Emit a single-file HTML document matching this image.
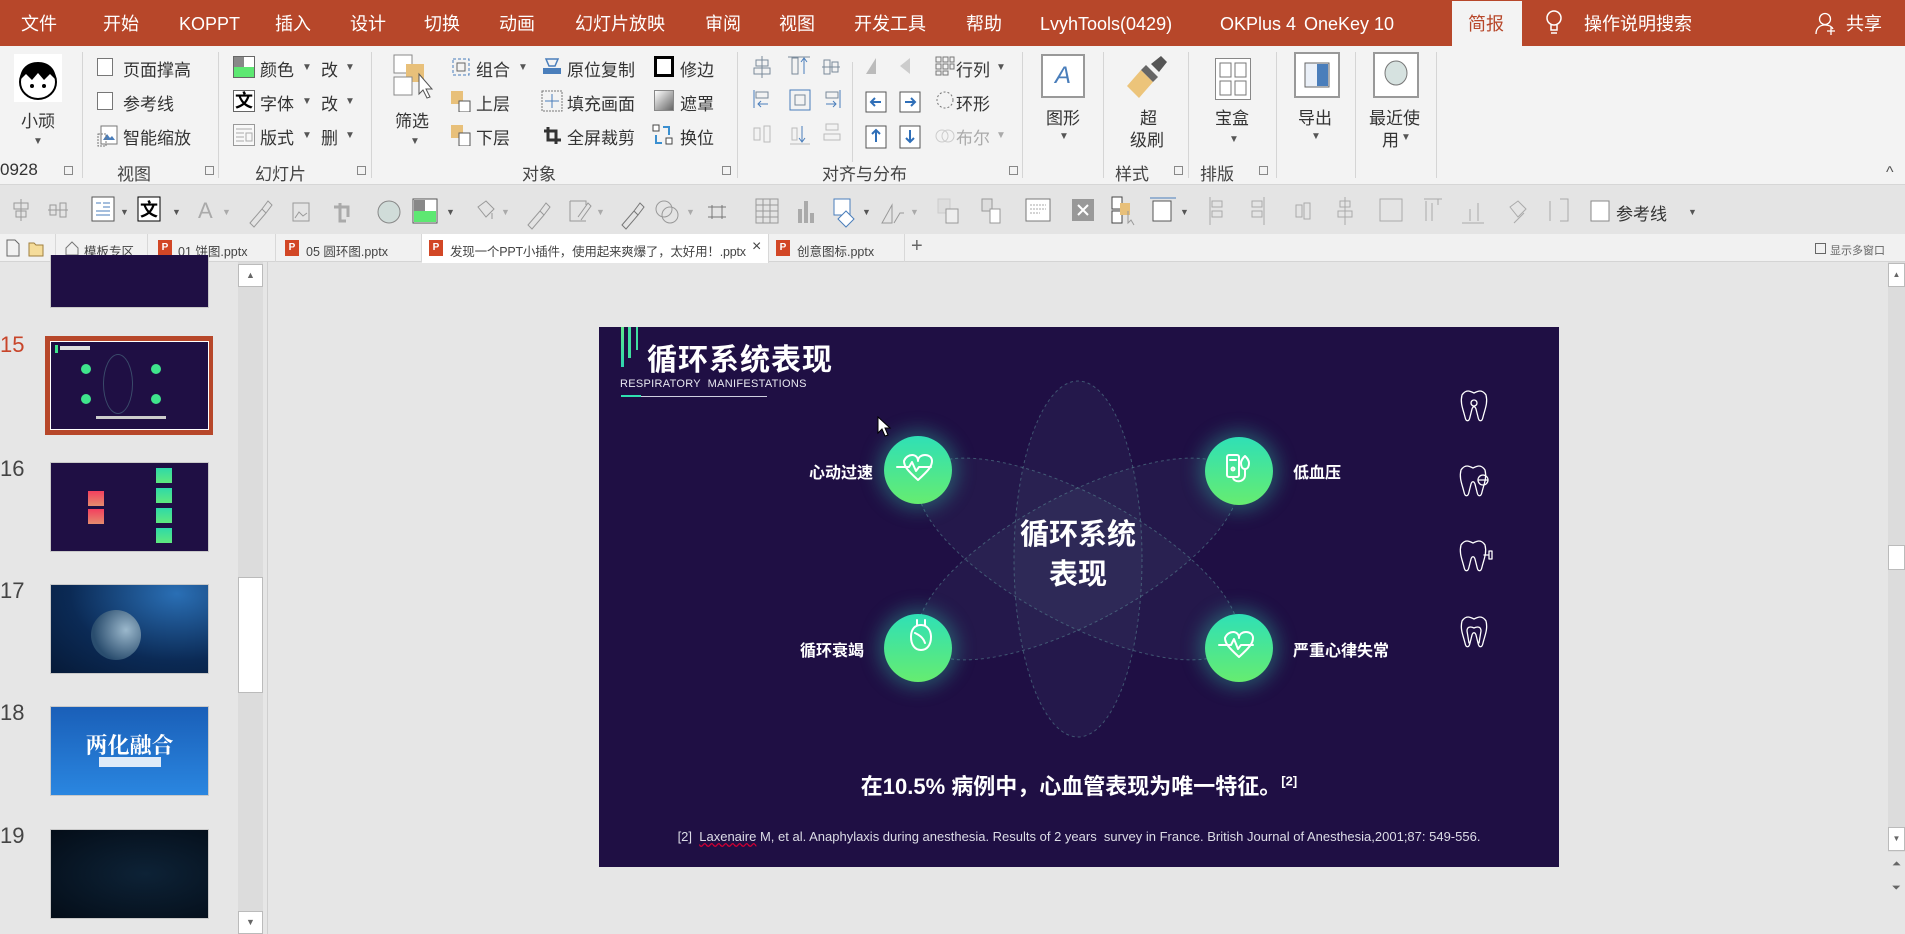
<!DOCTYPE html>
<html><head><meta charset="utf-8">
<style>
*{margin:0;padding:0;box-sizing:border-box}
body{width:1905px;height:934px;overflow:hidden;background:#e6e6e6;font-family:"Liberation Sans","Noto Sans CJK SC",sans-serif;position:relative;color:#333}
.a{position:absolute;white-space:nowrap}
#top{position:absolute;left:0;top:0;width:1905px;height:46px;background:#b7472a}
#top .a{color:#fff;font-size:18px;top:0;line-height:48px}
#rib{position:absolute;left:0;top:46px;width:1905px;height:139px;background:#f3f3f3;border-bottom:1px solid #d6d6d6}
.t{font-size:17px;color:#333}
.sep{position:absolute;top:52px;width:1px;height:126px;background:#d5d5d5}
.lbl{font-size:17px;color:#444;top:160px}
.dl{font-size:10px;color:#666;top:166px;width:9px;height:9px;border:1px solid #888}
.ar{font-size:10px;color:#555}
.ic{position:absolute}
#tb{position:absolute;left:0;top:185px;width:1905px;height:49px;background:#e4e4e4}
#ft{position:absolute;left:0;top:234px;width:1905px;height:28px;background:#f1f1f1;border-bottom:1px solid #d4d4d4}
#ft .a{font-size:12.5px;color:#444;top:7px}
.tab{position:absolute;top:0;height:28px;border-right:1px solid #d8d8d8}
.pp{position:absolute;top:6px;width:14px;height:16px;background:#d24726;color:#fff;font-size:10px;font-weight:bold;text-align:center;line-height:16px}
.num{position:absolute;left:0;font-size:22px;color:#444}
.th{position:absolute;left:50px;width:159px;height:90px;border:1px solid #c8c8c8}
#slide{position:absolute;left:599px;top:327px;width:960px;height:540px;background:#1f0f44;overflow:hidden}
.circ{position:absolute;width:68px;height:68px;border-radius:50%;background:linear-gradient(#2fe0b6,#66ec70);box-shadow:0 0 18px 6px rgba(50,200,170,.35)}
.sl{position:absolute;color:#fff;font-weight:bold;font-size:16px;white-space:nowrap}
</style></head><body>

<div id="top">
<span class="a" style="left:21px">文件</span>
<span class="a" style="left:103px">开始</span>
<span class="a" style="left:179px">KOPPT</span>
<span class="a" style="left:275px">插入</span>
<span class="a" style="left:350px">设计</span>
<span class="a" style="left:424px">切换</span>
<span class="a" style="left:499px">动画</span>
<span class="a" style="left:575px">幻灯片放映</span>
<span class="a" style="left:705px">审阅</span>
<span class="a" style="left:779px">视图</span>
<span class="a" style="left:854px">开发工具</span>
<span class="a" style="left:966px">帮助</span>
<span class="a" style="left:1040px">LvyhTools(0429)</span>
<span class="a" style="left:1220px">OKPlus 4</span>
<span class="a" style="left:1304px">OneKey 10</span>
<div style="position:absolute;left:1452px;top:1px;width:70px;height:45px;background:#f3f3f3"></div>
<span class="a" style="left:1468px;color:#b7472a !important">简报</span>
<svg class="ic" style="left:1545px;top:9px" width="18" height="28"><circle cx="9" cy="9" r="7" fill="none" stroke="#fff" stroke-width="1.5"/><path d="M6 16v5h6v-5M6 24h6" stroke="#fff" stroke-width="1.5" fill="none"/></svg>
<span class="a" style="left:1584px">操作说明搜索</span>
<svg class="ic" style="left:1815px;top:12px" width="22" height="24"><circle cx="10" cy="7" r="5.5" fill="none" stroke="#fff" stroke-width="1.3"/><path d="M1 22c0-6 4-9 9-9s7 2 8 4M16 15v8M12 19h8" stroke="#fff" stroke-width="1.3" fill="none"/></svg>
<span class="a" style="left:1846px">共享</span>
</div>
<style>#top span[style*="1468"]{color:#b7472a}</style>

<div id="rib">
<svg class="ic" style="left:14px;top:8px" width="48" height="48"><rect width="48" height="48" fill="#fff"/><ellipse cx="24" cy="28" rx="18" ry="17" fill="#fff" stroke="#000" stroke-width="2"/><path d="M6 26c0-12 8-18 18-18s18 6 18 18l-6-6-6 6-6-7-6 7-6-6z" fill="#000"/><circle cx="18" cy="32" r="2" fill="#000"/><circle cx="30" cy="32" r="2" fill="#000"/></svg>
<span class="a t" style="left:21px;top:61px">小顽</span>
<span class="a ar" style="left:33px;top:90px">▼</span>
<span class="a t" style="left:0;top:114px">0928</span>
<div class="a dl" style="left:64px;top:120px"></div>
<div class="sep" style="left:82px;top:6px"></div>
<div class="ic" style="left:97px;top:12px;width:16px;height:18px;border:1.5px solid #777;background:#fff"></div>
<span class="a t" style="left:123px;top:10px">页面撑高</span>
<div class="ic" style="left:97px;top:46px;width:16px;height:18px;border:1.5px solid #777;background:#fff"></div>
<span class="a t" style="left:123px;top:44px">参考线</span>
<svg class="ic" style="left:97px;top:78px" width="22" height="24"><rect x="4" y="2" width="16" height="18" fill="#fff" stroke="#777"/><path d="M6 16l4-6 3 4 2-2 3 4z" fill="#4a7ebb"/><rect x="1" y="10" width="8" height="12" fill="none" stroke="#777" stroke-dasharray="2 1"/></svg>
<span class="a t" style="left:123px;top:78px">智能缩放</span>
<span class="a lbl" style="left:117px;top:114px">视图</span>
<div class="a dl" style="left:205px;top:120px"></div>
<div class="sep" style="left:218px;top:6px"></div>
<svg class="ic" style="left:233px;top:10px" width="22" height="22"><rect x=".5" y=".5" width="21" height="21" fill="#fff" stroke="#666"/><rect x="1" y="1" width="10" height="10" fill="#888"/><rect x="1" y="11" width="20" height="10" fill="#5de872"/></svg>
<span class="a t" style="left:260px;top:10px">颜色</span><span class="a ar" style="left:302px;top:16px">▼</span>
<span class="a t" style="left:321px;top:10px">改</span><span class="a ar" style="left:345px;top:16px">▼</span>
<div class="ic" style="left:233px;top:44px;width:22px;height:22px;border:1px solid #666;background:#fff;font-size:18px;font-weight:bold;line-height:20px;text-align:center;color:#000">文</div>
<span class="a t" style="left:260px;top:44px">字体</span><span class="a ar" style="left:302px;top:50px">▼</span>
<span class="a t" style="left:321px;top:44px">改</span><span class="a ar" style="left:345px;top:50px">▼</span>
<svg class="ic" style="left:233px;top:78px" width="22" height="22"><rect x=".5" y=".5" width="21" height="21" fill="#f8f8f8" stroke="#999"/><path d="M3 5h16M3 9h8M3 13h8M3 17h8M13 9h6v8h-6z" stroke="#aaa" fill="none"/></svg>
<span class="a t" style="left:260px;top:78px">版式</span><span class="a ar" style="left:302px;top:84px">▼</span>
<span class="a t" style="left:321px;top:78px">删</span><span class="a ar" style="left:345px;top:84px">▼</span>
<span class="a lbl" style="left:255px;top:114px">幻灯片</span>
<div class="a dl" style="left:357px;top:120px"></div>
<div class="sep" style="left:371px;top:6px"></div>
<svg class="ic" style="left:393px;top:8px" width="42" height="48"><rect x="1" y="1" width="18" height="18" fill="#fff" stroke="#888"/><rect x="13" y="10" width="18" height="18" fill="#e8c07a"/><rect x="1" y="23" width="18" height="18" fill="#fff" stroke="#888"/><path d="M26 20l0 20 4-4 4 8 3-1-4-8 6 0z" fill="#fff" stroke="#555"/></svg>
<span class="a t" style="left:395px;top:61px">筛选</span>
<span class="a ar" style="left:410px;top:90px">▼</span>
<svg class="ic" style="left:450px;top:10px" width="22" height="22"><rect x="3" y="3" width="16" height="16" fill="none" stroke="#4a7ebb" stroke-dasharray="3 2"/><rect x="7" y="7" width="8" height="8" fill="none" stroke="#666"/></svg>
<span class="a t" style="left:476px;top:10px">组合</span><span class="a ar" style="left:518px;top:16px">▼</span>
<svg class="ic" style="left:450px;top:44px" width="22" height="22"><rect x="1" y="1" width="12" height="13" fill="#e8c07a"/><rect x="9" y="11" width="11" height="11" fill="#fff" stroke="#555"/></svg>
<span class="a t" style="left:476px;top:44px">上层</span>
<svg class="ic" style="left:450px;top:78px" width="22" height="22"><rect x="1" y="1" width="12" height="13" fill="#e8c07a"/><rect x="9" y="9" width="11" height="13" fill="#fff" stroke="#555"/></svg>
<span class="a t" style="left:476px;top:78px">下层</span>
<svg class="ic" style="left:541px;top:10px" width="22" height="22"><path d="M5 3h12l-3 7h-6z" fill="none" stroke="#4a7ebb" stroke-width="1.5"/><rect x="2" y="12" width="18" height="6" fill="#4a7ebb"/></svg>
<span class="a t" style="left:567px;top:10px">原位复制</span>
<svg class="ic" style="left:541px;top:44px" width="22" height="22"><rect x="1" y="1" width="20" height="20" fill="none" stroke="#777" stroke-dasharray="2 1"/><path d="M11 4v14M4 11h14" stroke="#4a7ebb"/></svg>
<span class="a t" style="left:567px;top:44px">填充画面</span>
<svg class="ic" style="left:541px;top:78px" width="22" height="22"><path d="M7 3v13h13M3 7h12v13" stroke="#333" stroke-width="3" fill="none"/></svg>
<span class="a t" style="left:567px;top:78px">全屏裁剪</span>
<div class="ic" style="left:654px;top:10px;width:20px;height:21px;border:3px solid #000;background:#fff"></div>
<span class="a t" style="left:680px;top:10px">修边</span>
<div class="ic" style="left:654px;top:44px;width:20px;height:21px;border:1px solid #888;background:linear-gradient(135deg,#fff,#666)"></div>
<span class="a t" style="left:680px;top:44px">遮罩</span>
<svg class="ic" style="left:652px;top:78px" width="22" height="22"><rect x="1" y="1" width="6" height="6" fill="#fff" stroke="#444"/><rect x="14" y="14" width="6" height="6" fill="#fff" stroke="#444"/><path d="M11 3h6v8M10 19h-6v-8" stroke="#3a8fd0" stroke-width="2" fill="none"/></svg>
<span class="a t" style="left:680px;top:78px">换位</span>
<span class="a lbl" style="left:522px;top:114px">对象</span>
<div class="a dl" style="left:722px;top:120px"></div>
<div class="sep" style="left:737px;top:6px"></div>
<svg class="ic" style="left:752px;top:8px" width="90" height="100" stroke="#7a8a9a" fill="none">
<rect x="4" y="6" width="12" height="6"/><rect x="2" y="14" width="16" height="6"/><path d="M10 2v22"/>
<rect x="40" y="4" width="6" height="16"/><path d="M52 20V4m-3 4l3-4 3 4" stroke="#4a7ebb"/><path d="M36 3h22"/>
<rect x="72" y="6" width="6" height="14"/><rect x="80" y="8" width="6" height="10"/><path d="M70 13h18"/>
<rect x="4" y="38" width="12" height="6"/><path d="M2 36v18M6 50h10m-7-3l-3 3 3 3" stroke="#4a7ebb"/>
<rect x="38" y="36" width="20" height="20" stroke="#4a7ebb"/><rect x="43" y="41" width="10" height="10"/>
<rect x="74" y="38" width="12" height="6"/><path d="M88 36v18M74 50h10m-3-3l3 3-3 3" stroke="#4a7ebb"/>
<g stroke="#bbb"><rect x="2" y="74" width="6" height="12"/><rect x="12" y="72" width="6" height="16"/><rect x="40" y="74" width="5" height="12"/><path d="M50 72v16m-3-4l3 4 3-4" stroke="#4a7ebb"/><path d="M38 90h20"/><rect x="74" y="70" width="12" height="6"/><rect x="72" y="80" width="16" height="6"/></g>
</svg>
<div class="sep" style="left:852px;top:16px;height:100px"></div>
<svg class="ic" style="left:864px;top:8px" width="70" height="100">
<path d="M2 20l10-16v16z" fill="#bbb"/><path d="M36 12l10-8v16z" fill="#ccc"/>
<rect x="2" y="38" width="20" height="20" fill="#fff" stroke="#555"/><path d="M17 48H7m4-4l-4 4 4 4" stroke="#2f6fb8" stroke-width="2" fill="none"/>
<rect x="36" y="38" width="20" height="20" fill="#fff" stroke="#555"/><path d="M41 48h10m-4-4l4 4-4 4" stroke="#2f6fb8" stroke-width="2" fill="none"/>
<rect x="2" y="72" width="20" height="22" fill="#fff" stroke="#555"/><path d="M12 88V76m-4 4l4-4 4 4" stroke="#2f6fb8" stroke-width="2" fill="none"/>
<rect x="36" y="72" width="20" height="22" fill="#fff" stroke="#555"/><path d="M46 76v12m-4-4l4 4 4-4" stroke="#2f6fb8" stroke-width="2" fill="none"/>
</svg>
<svg class="ic" style="left:935px;top:10px" width="20" height="90" fill="none" stroke="#777"><rect x="1" y="1" width="5" height="5"/><rect x="8" y="1" width="5" height="5"/><rect x="15" y="1" width="4" height="5"/><rect x="1" y="8" width="5" height="5"/><rect x="8" y="8" width="5" height="5"/><rect x="15" y="8" width="4" height="5"/><rect x="1" y="15" width="5" height="4"/><rect x="8" y="15" width="5" height="4"/><circle cx="10" cy="44" r="8" stroke-dasharray="2 2"/><circle cx="7" cy="80" r="6" stroke="#ccc"/><circle cx="13" cy="80" r="6" stroke="#ccc"/></svg>
<span class="a t" style="left:956px;top:10px">行列</span><span class="a ar" style="left:996px;top:16px">▼</span>
<span class="a t" style="left:956px;top:44px">环形</span>
<span class="a t" style="left:956px;top:78px;color:#aaa">布尔</span><span class="a ar" style="left:996px;top:84px;color:#aaa">▼</span>
<span class="a lbl" style="left:822px;top:114px">对齐与分布</span>
<div class="a dl" style="left:1009px;top:120px"></div>
<div class="sep" style="left:1022px;top:6px"></div>
<div class="ic" style="left:1041px;top:8px;width:44px;height:44px;border:2px solid #999;background:#fff;color:#4a7ebb;font-style:italic;font-size:24px;text-align:center;line-height:40px">A</div>
<span class="a t" style="left:1046px;top:58px">图形</span><span class="a ar" style="left:1059px;top:85px">▼</span>
<div class="sep" style="left:1103px;top:6px"></div>
<svg class="ic" style="left:1125px;top:10px" width="44" height="44"><path d="M2 30l14-16 12 12-14 16z" fill="#ecc47a"/><path d="M16 14l5-5 12 12-5 5z" fill="#666"/><path d="M26 8l10-8 6 6-8 10z" fill="#555"/></svg>
<span class="a t" style="left:1140px;top:58px">超</span>
<span class="a t" style="left:1130px;top:80px">级刷</span>
<span class="a lbl" style="left:1115px;top:114px">样式</span>
<div class="a dl" style="left:1174px;top:120px"></div>
<div class="sep" style="left:1188px;top:6px"></div>
<svg class="ic" style="left:1215px;top:12px" width="36" height="42"><rect x=".5" y=".5" width="35" height="41" fill="#fff" stroke="#888"/><rect x="5" y="5" width="11" height="14" fill="none" stroke="#777"/><rect x="20" y="5" width="11" height="14" fill="none" stroke="#777"/><rect x="5" y="23" width="11" height="14" fill="none" stroke="#777"/><rect x="20" y="23" width="11" height="14" fill="none" stroke="#777"/></svg>
<span class="a t" style="left:1215px;top:58px">宝盒</span><span class="a ar" style="left:1229px;top:88px">▼</span>
<span class="a lbl" style="left:1200px;top:114px">排版</span>
<div class="a dl" style="left:1259px;top:120px"></div>
<div class="sep" style="left:1276px;top:6px"></div>
<svg class="ic" style="left:1294px;top:6px" width="46" height="46"><rect x="1" y="1" width="44" height="44" fill="#fff" stroke="#999" stroke-width="2"/><rect x="11" y="11" width="24" height="24" fill="#eaf0f8" stroke="#666"/><rect x="23" y="12" width="11" height="22" fill="#4a7ebb"/></svg>
<span class="a t" style="left:1298px;top:58px">导出</span><span class="a ar" style="left:1311px;top:85px">▼</span>
<div class="sep" style="left:1355px;top:6px"></div>
<svg class="ic" style="left:1373px;top:6px" width="46" height="46"><rect x="1" y="1" width="44" height="44" fill="#fff" stroke="#999" stroke-width="2"/><ellipse cx="23" cy="21" rx="11" ry="12" fill="#d6e2e0" stroke="#777"/></svg>
<span class="a t" style="left:1369px;top:58px">最近使</span>
<span class="a t" style="left:1382px;top:80px">用</span><span class="a ar" style="left:1401px;top:86px">▼</span>
<div class="sep" style="left:1436px;top:6px"></div>
<span class="a" style="left:1886px;top:118px;font-size:16px;color:#555">^</span>
</div>

<div id="tb">
<svg width="1720" height="49" style="position:absolute;left:0;top:0" fill="none" stroke="#999">
<g transform="translate(12,14)"><rect x="2" y="4" width="14" height="6"/><rect x="4" y="12" width="10" height="6"/><path d="M9 0v22"/></g>
<g transform="translate(50,14)"><rect x="0" y="6" width="6" height="10"/><rect x="10" y="4" width="6" height="14"/><path d="M-2 11h20"/></g>
<g transform="translate(92,12)"><rect x="0" y="0" width="22" height="24" fill="#fff" stroke="#555"/><path d="M4 6h5M11 6h7M11 10h7M4 14h14M4 18h14" stroke="#4a7ebb"/></g>
<text x="120" y="30" font-size="9" fill="#555" stroke="none">▼</text>
<g transform="translate(138,12)"><rect x="0" y="0" width="22" height="24" fill="#fff" stroke="#000"/><text x="2" y="19" font-size="18" font-weight="bold" fill="#000" stroke="none">文</text></g>
<text x="172" y="30" font-size="9" fill="#555" stroke="none">▼</text>
<text x="198" y="33" font-size="22" fill="#aaa" stroke="none">A</text><text x="222" y="30" font-size="9" fill="#aaa" stroke="none">▼</text>
<path d="M250 38l12-14 4 4-12 14zM262 24l6-8 4 4-6 8"/>
<g transform="translate(290,13)"><rect x="3" y="5" width="16" height="18"/><path d="M5 20l4-6 4 4 4-3"/></g>
<path d="M340 18v18h6M334 22h14v10" stroke="#aaa" stroke-width="3"/>
<circle cx="389" cy="27" r="11" fill="#d0dcd9" stroke="#888"/>
<g transform="translate(413,14)"><rect x="0" y="0" width="24" height="24" fill="#fff" stroke="#555"/><rect x="1" y="1" width="11" height="11" fill="#888" stroke="none"/><rect x="1" y="12" width="22" height="11" fill="#5de872" stroke="none"/></g>
<text x="446" y="30" font-size="9" fill="#555" stroke="none">▼</text>
<path d="M478 22l8-6 8 8-8 8zM492 28v6"/><text x="501" y="30" font-size="9" fill="#aaa" stroke="none">▼</text>
<path d="M528 40l12-14 4 4-12 14zM540 26l6-8 4 4-6 8"/>
<path d="M570 16h16v4M570 16v20h16M578 32l10-14 3 3-10 14"/><text x="596" y="30" font-size="9" fill="#aaa" stroke="none">▼</text>
<path d="M622 40l12-14 4 4-12 14zM634 26l6-8 4 4-6 8" stroke="#777"/>
<circle cx="664" cy="24" r="8"/><circle cx="670" cy="30" r="8"/><text x="686" y="30" font-size="9" fill="#aaa" stroke="none">▼</text>
<path d="M712 20v14M722 20v14M708 22h18M708 32h18" stroke="#777"/>
<g transform="translate(756,14)"><rect x="0" y="0" width="22" height="24"/><path d="M0 6h22M0 12h22M0 18h22M7 0v24M14 0v24"/></g>
<path d="M800 38V24M806 38V16M812 38V28" stroke="#aaa" stroke-width="4"/>
<g transform="translate(834,14)"><rect x="0" y="0" width="16" height="16" fill="#fff" stroke="#4a7ebb"/><path d="M12 12l8 8-8 8-8-8z" fill="#fff" stroke="#4a7ebb"/></g>
<text x="862" y="30" font-size="9" fill="#555" stroke="none">▼</text>
<path d="M882 38l10-18v18zM894 38l6-10h4"/><text x="910" y="30" font-size="9" fill="#aaa" stroke="none">▼</text>
<rect x="938" y="14" width="12" height="14" fill="#ddd" stroke="#ccc"/><rect x="946" y="24" width="12" height="14" fill="#eee"/>
<rect x="982" y="14" width="10" height="12" fill="#ddd"/><rect x="990" y="24" width="10" height="14" fill="#fff"/>
<g transform="translate(1026,14)"><rect x="0" y="0" width="24" height="22" fill="#fff" stroke="#777"/><path d="M4 6h16M4 10h16M4 14h10" stroke="#aaa" stroke-dasharray="2 1"/></g>
<rect x="1072" y="14" width="22" height="22" fill="#999" stroke="none"/><path d="M1078 20l10 10M1088 20l-10 10" stroke="#fff" stroke-width="2"/>
<g transform="translate(1112,12)"><rect x="0" y="0" width="10" height="12" fill="#fff" stroke="#444"/><rect x="0" y="14" width="10" height="12" fill="#fff" stroke="#444"/><rect x="8" y="6" width="10" height="12" fill="#e8c07a" stroke="none"/><path d="M16 14v12l3-3 3 5"/></g>
<g transform="translate(1150,12)"><rect x="3" y="4" width="18" height="20" fill="#fff" stroke="#555"/><path d="M0 1h26" stroke="#4a7ebb"/></g>
<text x="1180" y="30" font-size="9" fill="#555" stroke="none">▼</text>
<g stroke="#aaa"><rect x="1212" y="16" width="10" height="6"/><rect x="1212" y="26" width="10" height="6"/><path d="M1210 12v28"/>
<rect x="1252" y="16" width="10" height="6"/><rect x="1252" y="26" width="10" height="6"/><path d="M1264 12v28"/>
<rect x="1296" y="20" width="6" height="12"/><rect x="1304" y="18" width="6" height="16"/>
<rect x="1340" y="16" width="10" height="6"/><rect x="1338" y="26" width="14" height="6"/><path d="M1345 12v28"/>
<rect x="1380" y="14" width="22" height="22"/>
<path d="M1426 16v20M1432 18v18M1438 14v6M1424 14h18"/>
<path d="M1470 36V24M1478 36V18M1462 38h22"/>
<path d="M1510 22l8-6 8 8-8 8zM1514 38l10-10"/>
<path d="M1550 16v20M1560 14h8v22h-8"/></g>
<rect x="1591" y="16" width="18" height="20" fill="#fff" stroke="#888"/>
<text x="1688" y="30" font-size="9" fill="#555" stroke="none">▼</text>
</svg>
<span class="a" style="left:1616px;top:15px;font-size:17px;color:#333">参考线</span>
</div>

<div id="ft">
<svg class="ic" style="left:5px;top:5px" width="40" height="18" fill="none" stroke="#666"><path d="M2 1h8l4 4v12H2z"/><path d="M24 4h5l2 2h7v11H24z" fill="#f5dc9a" stroke="#a08040"/></svg>
<div class="tab" style="left:55px;width:93px;border-left:1px solid #d8d8d8"></div>
<svg class="ic" style="left:65px;top:7px" width="14" height="15" fill="none" stroke="#777"><path d="M1 7l6-6 6 6v7H1z"/></svg>
<span class="a" style="left:84px">模板专区</span>
<div class="tab" style="left:148px;width:128px"></div><div class="pp" style="left:158px">P</div>
<span class="a" style="left:178px">01 饼图.pptx</span>
<div class="tab" style="left:276px;width:146px"></div><div class="pp" style="left:285px">P</div>
<span class="a" style="left:306px">05 圆环图.pptx</span>
<div class="tab" style="left:422px;width:347px;background:#fff;height:29px"></div><div class="pp" style="left:429px">P</div>
<span class="a" style="left:450px;letter-spacing:-0.2px">发现一个PPT小插件，使用起来爽爆了，太好用！.pptx</span>
<span class="a" style="left:752px;top:4px;font-size:16px">×</span>
<div class="tab" style="left:769px;width:136px"></div><div class="pp" style="left:776px">P</div>
<span class="a" style="left:797px">创意图标.pptx</span>
<span class="a" style="left:911px;top:1px;font-size:20px;color:#666">+</span>
<span class="a" style="left:1830px;font-size:11px;top:8px;color:#666">显示多窗口</span>
<div class="ic" style="left:1815px;top:9px;width:11px;height:11px;border:1px solid #666"></div>
</div>

<div style="position:absolute;left:0;top:262px;width:268px;height:672px;background:#e6e6e6;border-right:1px solid #cfcfcf"></div>
<div class="th" style="left:50px;top:255px;height:53px;background:#1f0f44;border-top:none"></div>
<span class="num" style="top:332px;color:#c8452a">15</span>
<div style="position:absolute;left:45px;top:336px;width:168px;height:99px;background:#b7472a"></div>
<div class="th" style="left:50px;top:341px;height:89px;background:#1f0f44;border-color:#fff">
<div style="position:absolute;left:4px;top:3px;width:3px;height:8px;background:#3fe48c"></div>
<div style="position:absolute;left:9px;top:4px;width:30px;height:4px;background:#ddd"></div>
<div style="position:absolute;left:30px;top:22px;width:10px;height:10px;border-radius:50%;background:#3fe48c"></div>
<div style="position:absolute;left:100px;top:22px;width:10px;height:10px;border-radius:50%;background:#3fe48c"></div>
<div style="position:absolute;left:30px;top:52px;width:10px;height:10px;border-radius:50%;background:#3fe48c"></div>
<div style="position:absolute;left:100px;top:52px;width:10px;height:10px;border-radius:50%;background:#3fe48c"></div>
<div style="position:absolute;left:52px;top:12px;width:30px;height:60px;border-radius:50%;border:1px solid #3a4a6a"></div>
<div style="position:absolute;left:45px;top:74px;width:70px;height:3px;background:#ccc"></div>
</div>
<span class="num" style="top:456px">16</span>
<div class="th" style="top:462px;background:#1f0f44">
<div style="position:absolute;left:37px;top:28px;width:16px;height:15px;background:linear-gradient(#f43f5e,#e58b6e)"></div>
<div style="position:absolute;left:37px;top:46px;width:16px;height:15px;background:linear-gradient(#f43f5e,#e58b6e)"></div>
<div style="position:absolute;left:105px;top:5px;width:16px;height:15px;background:linear-gradient(#2fd9a8,#5fe87e)"></div>
<div style="position:absolute;left:105px;top:25px;width:16px;height:15px;background:linear-gradient(#2fd9a8,#5fe87e)"></div>
<div style="position:absolute;left:105px;top:45px;width:16px;height:15px;background:linear-gradient(#2fd9a8,#5fe87e)"></div>
<div style="position:absolute;left:105px;top:65px;width:16px;height:15px;background:linear-gradient(#2fd9a8,#5fe87e)"></div>
</div>
<span class="num" style="top:578px">17</span>
<div class="th" style="top:584px;background:radial-gradient(ellipse at 80% 10%,#2a6fb5,#0b2a55 60%,#061a38);overflow:hidden">
<div style="position:absolute;left:40px;top:25px;width:50px;height:50px;border-radius:50%;background:radial-gradient(circle at 70% 40%,#9bb8cc,#2a4d6e 70%)"></div></div>
<span class="num" style="top:700px">18</span>
<div class="th" style="top:706px;background:linear-gradient(#1a5fb8,#2a86e0);overflow:hidden">
<div style="position:absolute;left:0;top:22px;width:157px;text-align:center;color:#fff;font-size:22px;font-weight:bold;font-family:'Noto Serif CJK SC',serif">两化融合</div>
<div style="position:absolute;left:48px;top:50px;width:62px;height:10px;background:#fff;opacity:.85"></div></div>
<span class="num" style="top:823px">19</span>
<div class="th" style="top:829px;background:radial-gradient(ellipse at 60% 50%,#0d2236,#040d18);"></div>
<div style="position:absolute;left:238px;top:262px;width:25px;height:672px;background:#dcdcdc"></div>
<div style="position:absolute;left:238px;top:264px;width:25px;height:23px;background:#fff;border:1px solid #bbb;font-size:9px;color:#666;text-align:center;line-height:21px">▲</div>
<div style="position:absolute;left:238px;top:577px;width:25px;height:116px;background:#fff;border:1px solid #bbb"></div>
<div style="position:absolute;left:238px;top:911px;width:25px;height:23px;background:#fff;border:1px solid #bbb;font-size:9px;color:#666;text-align:center;line-height:21px">▼</div>

<div style="position:absolute;left:1888px;top:262px;width:17px;height:590px;background:#dcdcdc"></div>
<div style="position:absolute;left:1888px;top:263px;width:17px;height:24px;background:#fff;border:1px solid #bbb;font-size:8px;color:#666;text-align:center;line-height:22px">▲</div>
<div style="position:absolute;left:1888px;top:545px;width:17px;height:25px;background:#fff;border:1px solid #bbb"></div>
<div style="position:absolute;left:1888px;top:827px;width:17px;height:24px;background:#fff;border:1px solid #bbb;font-size:8px;color:#666;text-align:center;line-height:22px">▼</div>
<span class="a" style="left:1892px;top:858px;font-size:11px;color:#666">⏶</span>
<span class="a" style="left:1892px;top:882px;font-size:11px;color:#666">⏷</span>

<div id="slide">
<div style="position:absolute;left:22px;top:0;width:3px;height:40px;background:linear-gradient(#5ee88a,#2fd6b0)"></div>
<div style="position:absolute;left:29px;top:0;width:3px;height:31px;background:#3fe0a0"></div>
<div style="position:absolute;left:37px;top:0;width:2px;height:23px;background:#3fe0a0"></div>
<div class="a" style="left:48px;top:8px;font-size:30px;font-weight:bold;color:#fff;letter-spacing:1px">循环系统表现</div>
<div class="a" style="left:21px;top:51px;font-size:11px;color:#e8e8f0;letter-spacing:0.3px">RESPIRATORY&nbsp; MANIFESTATIONS</div>
<div style="position:absolute;left:22px;top:69px;width:146px;height:1px;background:#cfcfe0"></div>
<div style="position:absolute;left:22px;top:68px;width:20px;height:2px;background:#2fe0b0"></div>
<svg style="position:absolute;left:0;top:0" width="960" height="540">
<g fill="rgba(120,160,170,0.07)" stroke="rgba(90,140,150,0.55)" stroke-dasharray="3 3" stroke-width="1">
<ellipse cx="479" cy="232" rx="64" ry="178"/>
<ellipse cx="479" cy="232" rx="64" ry="178" transform="rotate(62 479 232)"/>
<ellipse cx="479" cy="232" rx="64" ry="178" transform="rotate(-62 479 232)"/>
</g>
</svg>
<div class="a" style="left:399px;top:188px;width:160px;text-align:center;font-size:29px;font-weight:bold;color:#fff;line-height:40px">循环系统<br>表现</div>
<div class="circ" style="left:285px;top:109px"></div>
<div class="circ" style="left:606px;top:110px"></div>
<div class="circ" style="left:285px;top:287px"></div>
<div class="circ" style="left:606px;top:287px"></div>
<svg style="position:absolute;left:0;top:0" width="960" height="540" fill="none" stroke="#fff" stroke-width="2" stroke-linejoin="round" stroke-linecap="round">
<path d="M305 134c3-8 14-8 14 0 0-8 14-8 14 0 0 5-3 9-14 19-11-10-14-14-14-19zM298 140h12l3-5 4 9 3-4h12"/>
<rect x="628" y="128" width="12" height="22" rx="2"/><path d="M631 133h6"/><circle cx="634" cy="142" r="1.5"/><path d="M634 150c0 6 12 6 12-2v-6"/><path d="M646 142c-3 0-4-3-4-6s2-5 4-7c2 2 4 4 4 7s-1 6-4 6z"/>
<path d="M312 310c0-8 4-12 10-12 6 0 10 5 10 12 0 8-4 13-10 13s-10-5-10-13zM318 298v-5M326 298v-5M316 306c4 2 8 4 10 10"/>
<path d="M626 311c3-8 14-8 14 0 0-8 14-8 14 0 0 5-3 9-14 19-11-10-14-14-14-19zM620 318h12l3-6 4 10 3-4h12"/>
<g stroke-width="1.3">
<path d="M863 68c4-6 8-4 12-2 4-2 8-4 12 2 2 8-1 14-3 22-1 5-4 5-5 0l-2-8c-1-3-3-3-4 0l-2 8c-1 5-4 5-5 0-2-8-5-14-3-22z"/><circle cx="875" cy="76" r="3"/>
<path d="M862 143c4-6 8-4 12-2 4-2 8-4 12 2 2 8-1 14-3 22-1 5-4 5-5 0l-2-8c-1-3-3-3-4 0l-2 8c-1 5-4 5-5 0-2-8-5-14-3-22z"/><circle cx="884" cy="153" r="5"/><path d="M880 153h8"/>
<path d="M862 218c4-6 8-4 12-2 4-2 8-4 12 2 2 8-1 14-3 22-1 5-4 5-5 0l-2-8c-1-3-3-3-4 0l-2 8c-1 5-4 5-5 0-2-8-5-14-3-22z"/><path d="M885 228h5M890 224v8h3v-8z"/>
<path d="M863 294c4-6 8-4 12-2 4-2 8-4 12 2 2 8-1 14-3 22-1 5-4 5-5 0l-2-8c-1-3-3-3-4 0l-2 8c-1 5-4 5-5 0-2-8-5-14-3-22z"/><path d="M868 304c0-4 3-5 7-3 4-2 7-1 7 3l-2 12M868 304l2 12"/>
</g>
</svg>
<div class="sl" style="right:686px;top:132px">心动过速</div>
<div class="sl" style="left:694px;top:132px">低血压</div>
<div class="sl" style="right:695px;top:310px">循环衰竭</div>
<div class="sl" style="left:694px;top:310px">严重心律失常</div>
<div class="a" style="left:0;width:960px;text-align:center;top:442px;font-size:22px;font-weight:bold;color:#fff">在10.5% 病例中，心血管表现为唯一特征。<sup style="font-size:13px">[2]</sup></div>
<div class="a" style="left:0;width:960px;text-align:center;top:502px;font-size:13px;color:#dcdce6">[2]&nbsp; <span style="text-decoration:underline wavy #c03">Laxenaire</span> M, et al. Anaphylaxis during anesthesia. Results of 2 years&nbsp; survey in France. British Journal of Anesthesia,2001;87: 549-556.</div>
<svg style="position:absolute;left:278px;top:89px" width="16" height="22"><path d="M1 1v16l4-4 3 7 3-1-3-7h5z" fill="#fff" stroke="#000"/></svg>
</div>
</body></html>
